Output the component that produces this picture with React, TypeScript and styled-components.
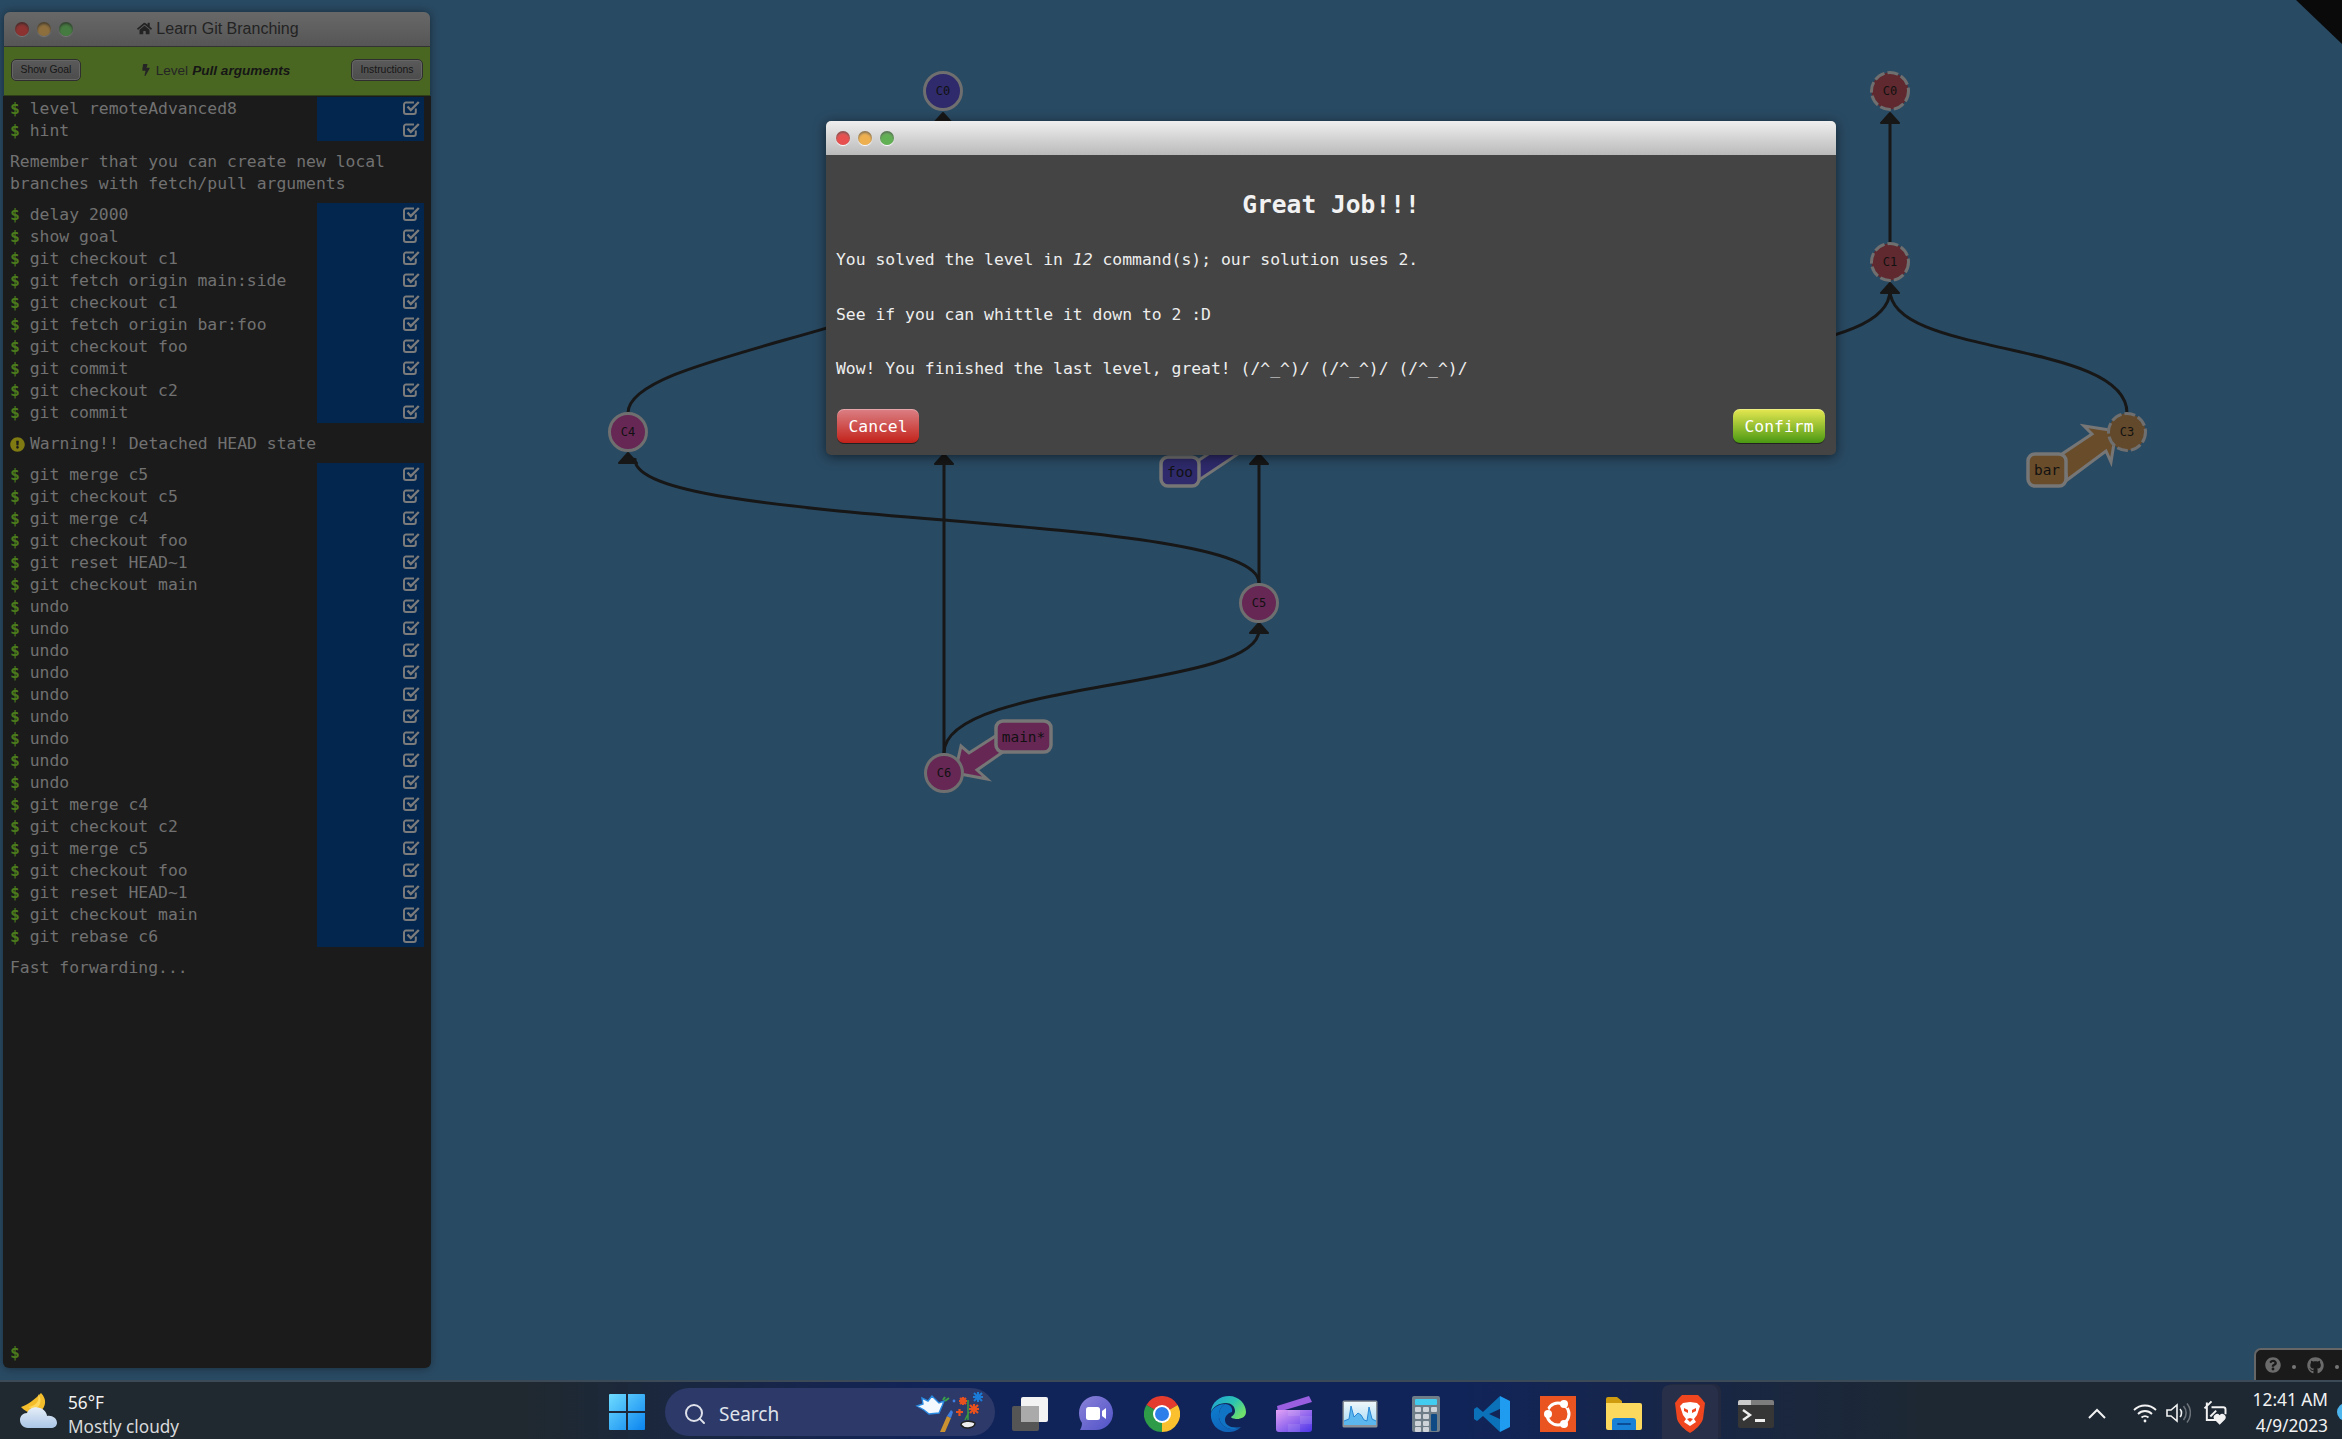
import React from 'react'
import styled, { createGlobalStyle } from 'styled-components'
import { FaBolt, FaExclamationCircle, FaGithub, FaHome, FaQuestionCircle } from 'react-icons/fa'
import { FiSearch } from 'react-icons/fi'

const mono = `"DejaVu Sans Mono", "Liberation Mono", monospace`
const sans = `"Liberation Sans", Arial, sans-serif`
const ui = `"Noto Sans", "Open Sans", sans-serif`

const GlobalStyle = createGlobalStyle`
  html, body { margin: 0; padding: 0; background: #294a63; overflow: hidden; }
  * { box-sizing: border-box; }
`

const Page = styled.div`
  width: 2342px;
  height: 1439px;
  display: flex;
  flex-direction: column;
  overflow: hidden;
`

const Stage = styled.main`
  position: relative;
  flex: 1;
  min-height: 0;
  background: #294a63;
  padding: 12px 0 12px 4px;
`

const Graph = styled.svg`
  position: absolute;
  inset: 0;
  width: 2342px;
  height: 1380px;
`

const NodeText = styled.text`
  font: 12px ${mono};
  fill: #111;
  text-anchor: middle;
  dominant-baseline: central;
`

const BranchText = styled.text`
  font: 14.4px ${mono};
  fill: #111;
  text-anchor: middle;
  dominant-baseline: central;
`

const Ribbon = styled.div`
  position: absolute;
  top: 0;
  right: 0;
  width: 46px;
  height: 44px;
  background: #0a0a0a;
  clip-path: polygon(0 0, 100% 0, 100% 100%);
`

const HelperBar = styled.div`
  position: absolute;
  right: 0;
  bottom: 0;
  width: 88px;
  height: 32px;
  display: flex;
  align-items: center;
  gap: 11px;
  padding: 0 0 0 9px;
  background: #1a1a1a;
  border: solid #666;
  border-width: 2px 0 0 2px;
  border-top-left-radius: 7px;
  color: #6b6b6b;
  font-size: 16px;
`

const HelperDot = styled.span`
  width: 4px;
  height: 4px;
  border-radius: 50%;
  background: #777;
  flex: none;
  margin-top: 4px;
`

/* left panel */
const Panel = styled.section`
  position: relative;
  width: 426px;
  height: 100%;
  display: flex;
  flex-direction: column;
  border-radius: 6px;
  box-shadow: 0 0 8px rgba(0, 0, 0, 0.45);
`

const PanelTitle = styled.header`
  position: relative;
  height: 35px;
  flex: none;
  display: flex;
  align-items: center;
  justify-content: center;
  gap: 4px;
  background: linear-gradient(#686868, #565656);
  border-bottom: 1px solid #333;
  border-radius: 6px 6px 0 0;
  font: 16px ${sans};
  color: #232323;
  padding: 0 0 1px 2px;
`

const Lights = styled.div`
  position: absolute;
  display: flex;
  gap: 8px;
  left: ${({ $left }: { $left: number }) => $left}px;
  top: 10px;
`

const Light = styled.span<{ $color: string; $rim: string }>`
  width: 14px;
  height: 14px;
  border-radius: 50%;
  background: radial-gradient(circle at 50% 65%, ${({ $color }) => $color} 40%, rgba(0, 0, 0, 0.25) 120%);
  box-shadow: 0 1px 1px ${({ $rim }) => $rim}, inset 0 2px 2px rgba(0, 0, 0, 0.3);
`

const LevelBar = styled.div`
  height: 49px;
  flex: none;
  display: flex;
  align-items: center;
  justify-content: space-between;
  padding: 0 7px 3px 7px;
  background: #4a6722;
  border-bottom: 1px solid #2f3f18;
`

const BarButton = styled.button<{ $width: number }>`
  width: ${({ $width }) => $width}px;
  height: 22px;
  padding: 0;
  background: linear-gradient(#5a5a5a, #4c4c4c);
  border: 1px solid #2f2f2f;
  border-radius: 5px;
  box-shadow: inset 0 0 0 1px #666;
  font: 10.4px ${sans};
  color: #161616;
`

const LevelName = styled.div`
  display: flex;
  align-items: center;
  gap: 4px;
  font: 13.6px ${sans};
  color: #252525;
  padding: 1px 2px 0 0;
  b { font-style: italic; color: #161616; }
`

const Terminal = styled.div`
  flex: 1;
  min-height: 0;
  margin: 0 -1px;
  display: flex;
  flex-direction: column;
  padding-top: 1px;
  background: #1b1b1b;
  border-radius: 0 0 6px 6px;
  font: 16.4px/22px ${mono};
  color: #717171;
`

const CommandGroup = styled.div`
  display: flex;
  flex-direction: column;
`

const CommandRow = styled.div`
  height: 22px;
  display: flex;
  justify-content: space-between;
  padding: 0 7px;
  white-space: pre;
  line-height: 24px;
`

const Prompt = styled.span`
  color: #4b7a1c;
  font-weight: bold;
`

const Status = styled.span`
  width: 107px;
  display: flex;
  align-items: center;
  justify-content: flex-end;
  padding: 0 4px 1px 0;
  background: #03264f;
`

const Note = styled.p`
  margin: 9px 0 8px;
  padding: 1px 7px 0;
  display: flex;
  align-items: center;
  gap: 5px;
`

const Warn = styled.span`
  display: flex;
  color: #7f7a12;
  font-size: 15px;
`

const BottomPrompt = styled.div`
  margin-top: auto;
  padding: 0 7px 4px;
`

/* modal */
const Modal = styled.section`
  position: absolute;
  left: 826px;
  top: 121px;
  width: 1010px;
  background: #444;
  border-radius: 5px;
  box-shadow: 0 2px 12px rgba(0, 0, 0, 0.55);
  font: 16.4px/22px ${mono};
  color: #eee;
`

const ModalHead = styled.header`
  position: relative;
  height: 34px;
  background: linear-gradient(#efefef, #bababa);
  border-radius: 5px 5px 0 0;
`

const ModalBody = styled.div`
  padding: 35px 10px 11px;
`

const ModalTitle = styled.h2`
  margin: 0 0 29px;
  font: bold 24.6px/30px ${mono};
  text-align: center;
  color: #f2f2f2;
`

const ModalText = styled.p`
  margin: 0 0 32.5px;
`

const ModalActions = styled.div`
  display: flex;
  justify-content: space-between;
  margin-top: -4px;
  padding: 0 1px;
`

const ActionButton = styled.button<{ $from: string; $to: string; $width: number }>`
  width: ${({ $width }) => $width}px;
  height: 35px;
  padding: 2px 0 0;
  border: 0;
  border-bottom: 1px solid #222;
  border-radius: 7px;
  background: linear-gradient(${({ $from }) => $from}, ${({ $to }) => $to});
  box-shadow: inset 0 1px 0 rgba(255, 255, 255, 0.3);
  font: 16.4px ${mono};
  color: #fff;
`

/* taskbar */
const Taskbar = styled.footer`
  height: 59px;
  flex: none;
  display: flex;
  align-items: center;
  background: linear-gradient(90deg, #20292f 0, #20292f 22%, #11245a 40%, #11245a 62%, #1d2833 82%, #1d2833 100%);
  border-top: 2px solid #3b4a56;
  color: #f2f2f2;
  font-family: ${ui};
`

const Weather = styled.div`
  width: 609px;
  flex: none;
  display: flex;
  align-items: center;
  gap: 10px;
  padding-left: 20px;
`

const WeatherText = styled.div`
  font-size: 17.2px;
  line-height: 24px;
  padding-top: 8px;
  span { display: block; }
  span + span { color: #d8dadc; }
`

const StartCell = styled.div`
  display: flex;
  padding-top: 2px;
`

const SearchPill = styled.div`
  position: relative;
  width: 330px;
  height: 48px;
  margin: 2px 2px 0 20px;
  padding: 4px 0 0 18px;
  display: flex;
  align-items: center;
  gap: 12px;
  background: #2c3969;
  border-radius: 24px;
  font-size: 19px;
  color: #dfe2ea;
  svg:first-child { flex: none; }
`

const Doodle = styled.svg`
  position: absolute;
  right: 8px;
  top: 4px;
`

const AppCell = styled.div<{ $active?: boolean }>`
  position: relative;
  width: 66px;
  height: 57px;
  flex: none;
  display: flex;
  align-items: center;
  justify-content: center;
  padding-top: 6px;
  ${({ $active }) =>
    $active &&
    `&::before {
      content: '';
      position: absolute;
      left: 5px;
      right: 5px;
      top: 3px;
      bottom: 0;
      background: #272f49;
      border-radius: 7px 7px 0 0;
      box-shadow: 3px -1px 0 #232a3f;
    }`}
  svg { position: relative; }
`

const Tray = styled.div`
  margin-left: auto;
  display: flex;
  align-items: center;
  padding-top: 4px;
`

const TrayIcon = styled.span<{ $ml: number }>`
  display: flex;
  margin-left: ${({ $ml }) => $ml}px;
`

const Clock = styled.div`
  margin-left: 24px;
  padding-right: 14px;
  text-align: right;
  font-size: 17.3px;
  line-height: 26px;
  position: relative;
  span { display: block; white-space: nowrap; }
  &::after {
    content: '';
    position: absolute;
    right: -13px;
    top: 16px;
    width: 18px;
    height: 18px;
    border-radius: 50%;
    background: #4db4ec;
  }
`

const nodes = [
  { id: 'C0', x: 943, y: 91, fill: '#2e2a6b' },
  { id: 'C4', x: 628, y: 432, fill: '#662755' },
  { id: 'C5', x: 1259, y: 603, fill: '#662755' },
  { id: 'C6', x: 944, y: 773, fill: '#662755' },
  { id: 'C0', x: 1890, y: 91, fill: '#5f292f', dashed: true },
  { id: 'C1', x: 1890, y: 262, fill: '#5f292f', dashed: true },
  { id: 'C3', x: 2127, y: 432, fill: '#63492b', dashed: true },
]

const edges = [
  'M628 413C628 368 800 345 943 290',
  'M1259 583C1259 510 628 530 635 458',
  'M1259 583V462',
  'M944 753V462',
  'M944 753C944 680 1259 690 1259 630',
  'M1890 243V122',
  'M2127 413C2127 340 1890 357 1890 290',
  'M1653 413C1653 340 1890 360 1890 290',
]

const arrows = [
  [943, 113],
  [628, 453],
  [944, 454],
  [1259, 454],
  [1259, 623],
  [1890, 113],
  [1890, 283],
]

const branches = [
  { name: 'foo', x: 1161, y: 457, w: 38, h: 29, fill: '#2e2a6b', tail: '1196,462 1245,430 1262,430 1250,446 1196,482' },
  { name: 'main*', x: 996, y: 721, w: 55, h: 31, fill: '#662755', tail: '955,773 961,746 969,753 997,735 1003,752 977,770 987,779' },
  { name: 'bar', x: 2028, y: 454, w: 38, h: 32, fill: '#694c2a', tail: '2116,431 2084,426 2092,434 2062,454 2067,480 2106,451 2111,462' },
]

const GraphDrawing = () => (
  <Graph viewBox="0 0 2342 1380">
    {edges.map(d => (
      <path key={d} d={d} fill="none" stroke="#171717" strokeWidth={3} />
    ))}
    {arrows.map(([x, y]) => (
      <path key={`${x}-${y}`} d={`M${x} ${y}L${x + 9} ${y + 10}H${x - 9}Z`} fill="#171717" stroke="#171717" strokeWidth={2} strokeLinejoin="round" />
    ))}
    {branches.map(b => (
      <polygon key={b.name} points={b.tail} fill={b.fill} stroke="#767676" strokeWidth={3} strokeLinejoin="miter" />
    ))}
    {nodes.map(n => (
      <g key={`${n.id}-${n.x}`}>
        <circle cx={n.x} cy={n.y} r={18.5} fill={n.fill} stroke="#6f6f6f" strokeWidth={3} strokeDasharray={n.dashed ? '11 3' : undefined} />
        <NodeText x={n.x} y={n.y}>{n.id}</NodeText>
      </g>
    ))}
    {branches.map(b => (
      <g key={b.name}>
        <rect x={b.x} y={b.y} width={b.w} height={b.h} rx={7} fill={b.fill} stroke="#767676" strokeWidth={3.5} />
        <BranchText x={b.x + b.w / 2} y={b.y + b.h / 2}>{b.name}</BranchText>
      </g>
    ))}
  </Graph>
)

const CheckIcon = () => (
  <svg width="17" height="15" viewBox="0 0 17 15" fill="none" stroke="#7b7b7b" strokeWidth="2">
    <path d="M12.8 8.5V12a2 2 0 0 1-2 2H3a2 2 0 0 1-2-2V4.5a2 2 0 0 1 2-2h8" />
    <path d="M4.5 6.5L7.8 10L15.8 2" strokeWidth="2.4" />
  </svg>
)

const Command = ({ text }: { text: string }) => (
  <CommandRow>
    <span>
      <Prompt>$</Prompt> {text}
    </span>
    <Status>
      <CheckIcon />
    </Status>
  </CommandRow>
)

const Commands = ({ items }: { items: string[] }) => (
  <CommandGroup>
    {items.map((c, i) => (
      <Command key={i} text={c} />
    ))}
  </CommandGroup>
)

const groupA = ['level remoteAdvanced8', 'hint']
const groupB = ['delay 2000', 'show goal', 'git checkout c1', 'git fetch origin main:side', 'git checkout c1', 'git fetch origin bar:foo', 'git checkout foo', 'git commit', 'git checkout c2', 'git commit']
const groupC = [
  'git merge c5', 'git checkout c5', 'git merge c4', 'git checkout foo', 'git reset HEAD~1', 'git checkout main',
  'undo', 'undo', 'undo', 'undo', 'undo', 'undo', 'undo', 'undo', 'undo',
  'git merge c4', 'git checkout c2', 'git merge c5', 'git checkout foo', 'git reset HEAD~1', 'git checkout main', 'git rebase c6',
]

const WeatherIcon = () => (
  <svg width="38" height="36" viewBox="0 0 38 36">
    <defs>
      <linearGradient id="cloud" x1="0" y1="0" x2="0" y2="1">
        <stop offset="0" stopColor="#e6eef8" />
        <stop offset="1" stopColor="#aac6e6" />
      </linearGradient>
    </defs>
    <path d="M21 0C15 6 8 12 1 14C6 20 15 22 21 18C26 13 27 6 21 0Z" fill="#f3bd2c" />
    <path d="M18 1C20 8 16 13 8 14L14 16C20 15 23 7 18 1Z" fill="#ffd75a" />
    <path d="M8 35C3 35 0 31 0 27C0 23 3 20 7 20C9 15 15 13 20 15C24 16 27 20 27 23C32 22 37 25 37 30C37 33 34 35 31 35Z" fill="url(#cloud)" />
  </svg>
)

const StartIcon = () => (
  <svg width="36" height="36" viewBox="0 0 36 36">
    <defs>
      <linearGradient id="win" x1="0" y1="0" x2="1" y2="1">
        <stop offset="0" stopColor="#6fdcff" />
        <stop offset="1" stopColor="#0a84f0" />
      </linearGradient>
    </defs>
    <path d="M1 0H17V17H0V1A1 1 0 0 1 1 0ZM19 0H35A1 1 0 0 1 36 1V17H19ZM0 19H17V36H1A1 1 0 0 1 0 35ZM19 19H36V35A1 1 0 0 1 35 36H19Z" fill="url(#win)" />
  </svg>
)

const SearchDoodle = () => (
  <Doodle width="72" height="42" viewBox="0 0 72 42">
    <path d="M2 14L8 12L7 6L13 9L17 4L24 11L29 9L27 14L24 21L14 22L9 18Z" fill="#f4f8ff" stroke="#2a8ae0" strokeWidth="1.4" />
    <path d="M28 8L30 5M30 9L34 6" stroke="#39a34a" strokeWidth="2" />
    <path d="M25 40L32 24L36 26L30 40Z" fill="#c9912f" />
    <path d="M32 24L36 18L38 20L36 26Z" fill="#3f7fe0" />
    <circle cx="39" cy="9" r="1.4" fill="#3f7fe0" />
    <g stroke="#e8501e" strokeWidth="2.2">
      <path d="M44 9H52M48 5V13M45 6L51 12M51 6L45 12" />
      <path d="M41 20H48M44.5 17V24" />
      <path d="M54 17H64M59 12V22M55 13L63 21M63 13L55 21" />
    </g>
    <path d="M58 5H68M63 0V10M59 1L67 9M67 1L59 9" stroke="#1b7bd8" strokeWidth="2" />
    <path d="M53 8V28M54 20L50 28" stroke="#3b9b3e" strokeWidth="1.5" />
    <path d="M46 33C46 29 56 28 60 31C60 36 50 38 46 33Z" fill="#eee" stroke="#222" strokeWidth="1.4" />
  </Doodle>
)

const TaskViewIcon = () => (
  <svg width="36" height="34" viewBox="0 0 36 34">
    <rect x="0" y="9" width="27" height="25" rx="2" fill="#555" />
    <rect x="9" y="0" width="27" height="25" rx="2" fill="#f3f3f3" />
    <rect x="9" y="9" width="18" height="16" fill="#aaa" />
  </svg>
)

const TeamsIcon = () => (
  <svg width="34" height="36" viewBox="0 0 34 36">
    <defs>
      <linearGradient id="teams" x1="0" y1="0" x2="1" y2="1">
        <stop offset="0" stopColor="#8b82d8" />
        <stop offset="1" stopColor="#4f52c8" />
      </linearGradient>
    </defs>
    <path d="M17 0C26 0 34 7 34 17C34 27 26 34 17 34H1C2 32 3 30 3 27C1 24 0 21 0 17C0 7 8 0 17 0Z" fill="url(#teams)" />
    <rect x="7" y="11" width="14" height="13" rx="2.5" fill="#fff" />
    <path d="M23 15L27 12V23L23 20Z" fill="#fff" />
  </svg>
)

const ChromeIcon = () => (
  <svg width="36" height="36" viewBox="0 0 36 36">
    <path d="M18 18L2.4 9A18 18 0 0 1 33.6 9Z" fill="#e33b2e" />
    <path d="M18 18L33.6 9A18 18 0 0 1 18 36Z" fill="#fbc02d" />
    <path d="M18 18L18 36A18 18 0 0 1 2.4 9Z" fill="#2e9b48" />
    <circle cx="18" cy="18" r="9" fill="#fff" />
    <circle cx="18" cy="18" r="7" fill="#2f7fea" />
  </svg>
)

const EdgeIcon = () => (
  <svg width="36" height="36" viewBox="0 0 36 36">
    <defs>
      <linearGradient id="edgeTop" x1="0" y1="0" x2="1" y2="0.6">
        <stop offset="0" stopColor="#1e9fd8" />
        <stop offset="0.6" stopColor="#2cc3b0" />
        <stop offset="1" stopColor="#6fe06c" />
      </linearGradient>
      <linearGradient id="edgeLow" x1="0" y1="0" x2="0.6" y2="1">
        <stop offset="0" stopColor="#0d7fd0" />
        <stop offset="1" stopColor="#0f62b8" />
      </linearGradient>
    </defs>
    <path d="M1 17C1 6 10 0 19 0C29 0 36 8 36 16C36 21 31 23 27 23C24 23 21 22 21 21C24 19 25 17 25 15C25 10 21 7 16 7C9 7 2 11 1 17Z" fill="url(#edgeTop)" />
    <path d="M1 17C3 11 10 8 15 8C9 11 7 20 11 27C15 33 24 35 31 31C27 35 23 36 18 36C8 36 0 28 1 17Z" fill="url(#edgeLow)" />
    <path d="M15 8C20 8 23 12 22 16C18 17 15 20 15 24C15 29 21 33 31 31C24 35 15 33 11 27C7 20 9 11 15 8Z" fill="#1173c4" />
  </svg>
)

const ClipIcon = () => (
  <svg width="36" height="36" viewBox="0 0 36 36">
    <defs>
      <linearGradient id="clip" x1="0" y1="0" x2="1" y2="1">
        <stop offset="0" stopColor="#e3a2f5" />
        <stop offset="1" stopColor="#4a34e8" />
      </linearGradient>
    </defs>
    <path d="M1 10L33 0L36 6L2 16Z" fill="#9a5fe0" />
    <path d="M0 14H36V33A3 3 0 0 1 33 36H3A3 3 0 0 1 0 33Z" fill="url(#clip)" />
    <path d="M12 14V20H24V14ZM24 20V28H36V20ZM12 28H24V36H12Z" fill="#fff" fillOpacity=".1" />
  </svg>
)

const PerfIcon = () => (
  <svg width="36" height="28" viewBox="0 0 36 28">
    <defs>
      <linearGradient id="perf" x1="0" y1="0" x2="0" y2="1">
        <stop offset="0" stopColor="#eef6fa" />
        <stop offset="1" stopColor="#a8dcf6" />
      </linearGradient>
    </defs>
    <rect x="0.5" y="0.5" width="35" height="27" rx="1.5" fill="#8a9198" />
    <rect x="2" y="2" width="32" height="23" fill="url(#perf)" />
    <path d="M2 21L7 19L9 6L12 17L16 13L19 15L22 20L25 21L27 7L30 19L34 21V25H2Z" fill="#5cb7ee" />
    <path d="M2 21L7 19L9 6L12 17L16 13L19 15L22 20L25 21L27 7L30 19L34 21" fill="none" stroke="#1d7fd0" strokeWidth="0.9" />
  </svg>
)

const CalcIcon = () => {
  const keys = [[3, 11], [11, 11], [19, 11], [3, 18], [11, 18], [3, 25], [11, 25], [3, 31], [11, 31]]
  return (
    <svg width="28" height="36" viewBox="0 0 28 36">
      <rect width="28" height="36" rx="2" fill="#6f7d88" />
      <rect x="3" y="3" width="22" height="6" rx="1" fill="#42cdf0" />
      {keys.map(([x, y]) => (
        <rect key={`${x}-${y}`} x={x} y={y} width="6" height="5" rx="1" fill="#cdd3d8" />
      ))}
      <rect x="19" y="18" width="6" height="17" rx="1" fill="#0f4a85" />
    </svg>
  )
}

const CodeIcon = () => (
  <svg width="36" height="36" viewBox="0 0 36 36">
    <path d="M26 0L9 16L3 11L0 13V23L3 25L9 20L26 36L28 24L15 18L28 12Z" fill="#0b72b9" />
    <path d="M26 0L36 5V31L26 36L26 26V10Z" fill="#1f9bf0" />
  </svg>
)

const UbuntuIcon = () => (
  <svg width="36" height="36" viewBox="0 0 36 36">
    <rect width="36" height="36" fill="#e95420" />
    <circle cx="18" cy="18" r="11" fill="none" stroke="#fff" strokeWidth="3" />
    <path d="M9 18L4 9M26 11L33 3M22 29L28 34" stroke="#e95420" strokeWidth="3.6" />
    <circle cx="8" cy="18" r="4" fill="#fff" />
    <circle cx="24" cy="8" r="4" fill="#fff" />
    <circle cx="24" cy="28" r="4" fill="#fff" />
  </svg>
)

const FolderIcon = () => (
  <svg width="36" height="33" viewBox="0 0 36 33">
    <path d="M0 2A2 2 0 0 1 2 0H11L16 4V10H0Z" fill="#cf9c10" />
    <path d="M0 6H34A2 2 0 0 1 36 8V31A2 2 0 0 1 34 33H2A2 2 0 0 1 0 31Z" fill="#fbd95f" />
    <path d="M6 33V24A3 3 0 0 1 9 21H27A3 3 0 0 1 30 24V33Z" fill="#1781d8" />
    <rect x="11" y="26" width="14" height="2" rx="1" fill="#0a4d96" />
  </svg>
)

const BraveIcon = () => (
  <svg width="30" height="38" viewBox="0 0 30 38">
    <path d="M7 0H23L26 3L30 8L28 24C26 30 20 35 15 38C10 35 4 30 2 24L0 8L4 3Z" fill="#f0461f" />
    <path d="M8 8L15 7L22 8L25 11L22 20L19 24L21 27L15 31L9 27L11 24L8 20L5 11Z" fill="#fff" />
    <path d="M9 13L13 15V18L9 16ZM21 13L17 15V18L21 16ZM12 24L15 23L18 24L15 27Z" fill="#f0461f" />
  </svg>
)

const ConsoleIcon = () => (
  <svg width="36" height="28" viewBox="0 0 36 28">
    <rect width="36" height="28" rx="2" fill="#363636" />
    <path d="M0 2A2 2 0 0 1 2 0H13V5H0Z" fill="#c9c9c9" />
    <path d="M13 0H34A2 2 0 0 1 36 2V5H13Z" fill="#7d7d7d" />
    <path d="M5 10L12 15L5 20" fill="none" stroke="#eee" strokeWidth="2.4" />
    <rect x="17" y="19" width="10" height="3" fill="#eee" />
  </svg>
)

const apps = [
  { key: 'taskview', icon: <TaskViewIcon /> },
  { key: 'teams', icon: <TeamsIcon /> },
  { key: 'chrome', icon: <ChromeIcon /> },
  { key: 'edge', icon: <EdgeIcon /> },
  { key: 'clipchamp', icon: <ClipIcon /> },
  { key: 'perfmon', icon: <PerfIcon /> },
  { key: 'calc', icon: <CalcIcon /> },
  { key: 'vscode', icon: <CodeIcon /> },
  { key: 'ubuntu', icon: <UbuntuIcon /> },
  { key: 'explorer', icon: <FolderIcon /> },
  { key: 'brave', icon: <BraveIcon />, active: true },
  { key: 'terminal', icon: <ConsoleIcon /> },
]

const App = () => {
  return (
    <Page>
      <GlobalStyle />
      <Stage>
        <GraphDrawing />
        <Ribbon />
        <Panel>
          <PanelTitle>
            <Lights $left={11}>
              <Light $color="#8c3230" $rim="#777" />
              <Light $color="#8d6f3e" $rim="#777" />
              <Light $color="#457a40" $rim="#777" />
            </Lights>
            <FaHome size={15} /> Learn Git Branching
          </PanelTitle>
          <LevelBar>
            <BarButton $width={70}>Show Goal</BarButton>
            <LevelName>
              <FaBolt size={12} /> Level <b>Pull arguments</b>
            </LevelName>
            <BarButton $width={72}>Instructions</BarButton>
          </LevelBar>
          <Terminal>
            <Commands items={groupA} />
            <Note>
              Remember that you can create new local
              <br />
              branches with fetch/pull arguments
            </Note>
            <Commands items={groupB} />
            <Note>
              <Warn>
                <FaExclamationCircle />
              </Warn>
              Warning!! Detached HEAD state
            </Note>
            <Commands items={groupC} />
            <Note>Fast forwarding...</Note>
            <BottomPrompt>
              <Prompt>$</Prompt>
            </BottomPrompt>
          </Terminal>
        </Panel>
        <Modal>
          <ModalHead>
            <Lights $left={10}>
              <Light $color="#e8504f" $rim="#fff" />
              <Light $color="#eeb04f" $rim="#fff" />
              <Light $color="#62b054" $rim="#fff" />
            </Lights>
          </ModalHead>
          <ModalBody>
            <ModalTitle>Great Job!!!</ModalTitle>
            <ModalText>
              You solved the level in <i>12</i> command(s); our solution uses 2.
            </ModalText>
            <ModalText>See if you can whittle it down to 2 :D</ModalText>
            <ModalText>Wow! You finished the last level, great! (/^_^)/ (/^_^)/ (/^_^)/</ModalText>
            <ModalActions>
              <ActionButton $from="#db8085" $to="#c32219" $width={82}>Cancel</ActionButton>
              <ActionButton $from="#e6e851" $to="#4a9812" $width={92}>Confirm</ActionButton>
            </ModalActions>
          </ModalBody>
        </Modal>
        <HelperBar>
          <FaQuestionCircle />
          <HelperDot />
          <FaGithub size={17} />
          <HelperDot />
        </HelperBar>
      </Stage>
      <Taskbar>
        <Weather>
          <WeatherIcon />
          <WeatherText>
            <span>56°F</span>
            <span>Mostly cloudy</span>
          </WeatherText>
        </Weather>
        <StartCell>
          <StartIcon />
        </StartCell>
        <SearchPill>
          <FiSearch size={24} />
          Search
          <SearchDoodle />
        </SearchPill>
        {apps.map(a => (
          <AppCell key={a.key} $active={a.active}>
            {a.icon}
          </AppCell>
        ))}
        <Tray>
          <TrayIcon $ml={0}>
            <svg width="20" height="12" viewBox="0 0 20 12" fill="none" stroke="#f2f2f2" strokeWidth="2">
              <path d="M2 11L10 3L18 11" />
            </svg>
          </TrayIcon>
          <TrayIcon $ml={26}>
            <svg width="24" height="20" viewBox="0 0 24 20" fill="none" stroke="#f2f2f2" strokeWidth="1.8">
              <path d="M1 7C7 1 17 1 23 7M5 11C9 7 15 7 19 11M8.5 14.5C10.5 13 13.5 13 15.5 14.5" />
              <circle cx="12" cy="18" r="1.4" fill="#f2f2f2" stroke="none" />
            </svg>
          </TrayIcon>
          <TrayIcon $ml={9}>
            <svg width="25" height="22" viewBox="0 0 25 22" fill="none" stroke="#f2f2f2" strokeWidth="1.6">
              <path d="M1 8H5L11 3V19L5 14H1Z" />
              <path d="M14 7C16 9 16 13 14 15" />
              <path d="M17.5 4C21 8 21 14 17.5 18M21 1.5C25.5 7 25.5 15 21 20.5" stroke="#6c7278" />
            </svg>
          </TrayIcon>
          <TrayIcon $ml={10}>
            <svg width="28" height="28" viewBox="0 0 24 24" fill="none" stroke="#f2f2f2" strokeWidth="1.7">
              <path d="M5 3V18H14M3 8L9 2M9 7H19A2 2 0 0 1 21 9V13" />
              <path d="M16 22L11.5 17.5A2.8 2.8 0 0 1 16 14A2.8 2.8 0 0 1 20.5 17.5Z" fill="#f2f2f2" stroke="none" />
              <path d="M8 15L13 10" />
            </svg>
          </TrayIcon>
          <Clock>
            <span>12:41 AM</span>
            <span>4/9/2023</span>
          </Clock>
        </Tray>
      </Taskbar>
    </Page>
  )
}

export default App
